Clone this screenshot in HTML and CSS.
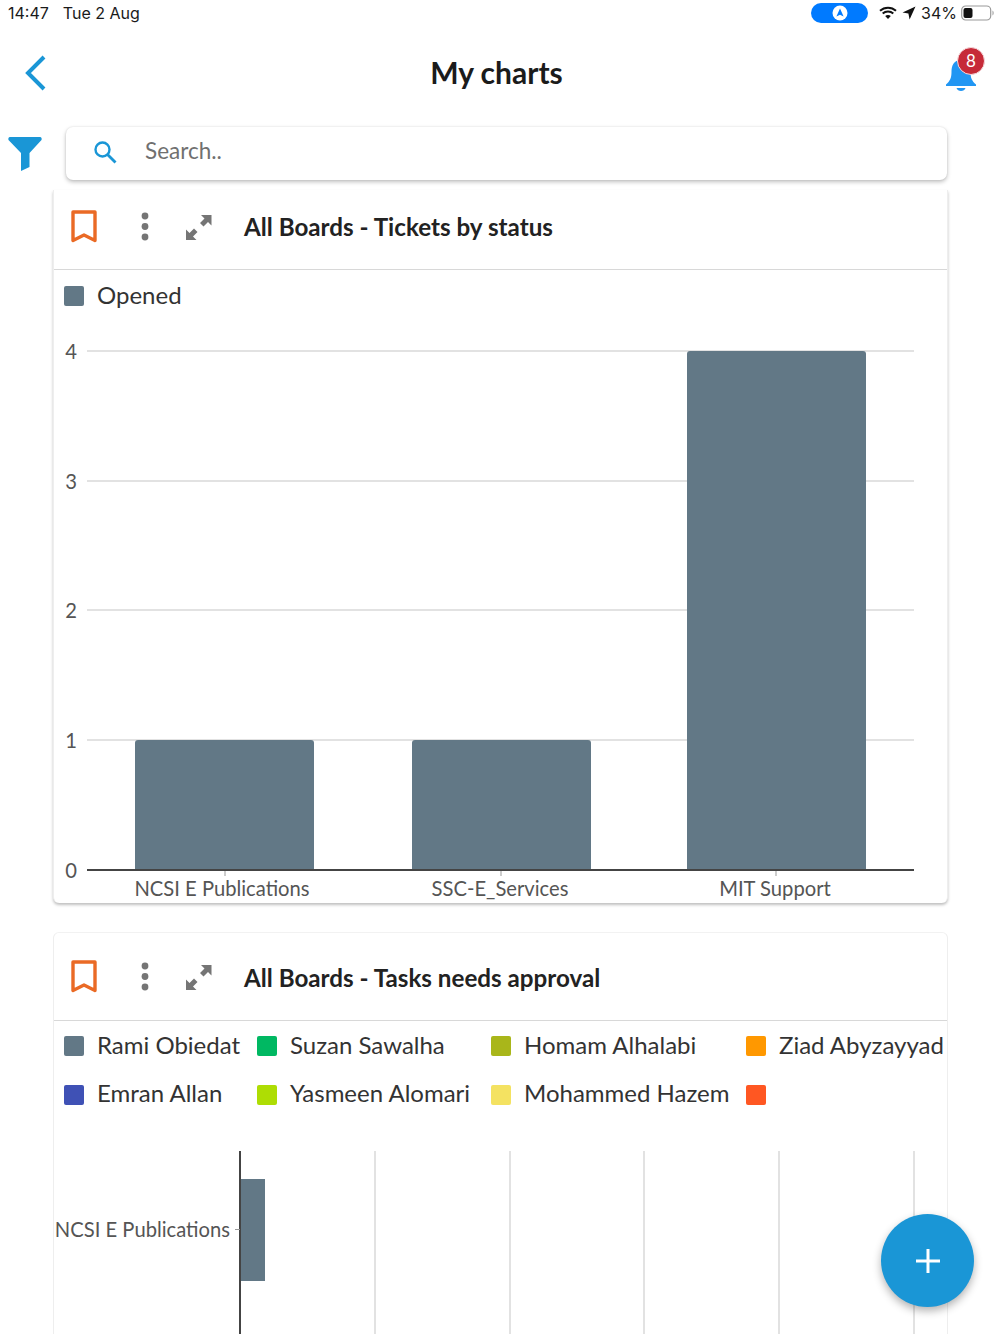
FILE: index.html
```html
<!DOCTYPE html>
<html>
<head>
  <title>My charts</title>
  <link rel="stylesheet" href="styles.css">
</head>
<body>
  <div id="app">

    <div class="status_bar">
      <span class="status_time">14:47</span>
      <span class="status_date">Tue 2 Aug</span>
      <span class="status_right">
        <span class="pill">
          <svg width="16" height="16" viewBox="0 0 16 16"><circle cx="8" cy="8" r="7.5" fill="#fff"/><path d="M8 3.5 L11.6 11.6 L8 9.8 L4.4 11.6 Z" fill="#007aff"/></svg>
        </span>
        <svg class="wifi" width="18" height="14" viewBox="0 0 18 14"><path d="M1 4.8 C5.5 .6 12.5 .6 17 4.8 M3.7 7.6 C6.7 4.9 11.3 4.9 14.3 7.6" fill="none" stroke="#111" stroke-width="2"/><path d="M6.2 10 C7.8 8.6 10.2 8.6 11.8 10 L9 13 Z" fill="#111"/></svg>
        <svg class="location" width="14" height="14" viewBox="0 0 14 14"><path d="M13.5 .5 L7.6 13.5 L6.4 7.6 L.5 6.4 Z" fill="#111"/></svg>
        <span class="status_pct">34%</span>
        <svg width="33" height="16" viewBox="0 0 33 16"><rect x=".7" y="1" width="29" height="14" rx="4" fill="none" stroke="#9a9a9a" stroke-width="1.2"/><rect x="2.5" y="3" width="9" height="10" rx="2" fill="#111"/><path d="M31.5 5.5 C33 6.2 33 9.8 31.5 10.5 Z" fill="#9a9a9a"/></svg>
      </span>
    </div>

    <div class="top_bar">
      <svg class="back" width="26" height="40" viewBox="0 0 26 40"><path d="M21 4 L5 20 L21 36" fill="none" stroke="#1a96d6" stroke-width="4"/></svg>
      <h1 class="page_title">My charts</h1>
      <div class="bell">
        <svg width="34" height="36" viewBox="0 0 34 36"><path d="M17 3 C9.5 3 7.5 9 7.5 15 C7.5 21 6 24 2 27.5 L2 29 L32 29 L32 27.5 C28 24 26.5 21 26.5 15 C26.5 9 24.5 3 17 3 Z" fill="#2196f3"/><path d="M12.5 31 L21.5 31 C20.5 35 13.5 35 12.5 31 Z" fill="#2196f3"/></svg>
        <span class="badge">8</span>
      </div>
    </div>

    <div class="search_row">
      <svg class="filter" width="34" height="34" viewBox="0 0 34 34"><path d="M2 0 L32 0 C33.5 0 34 1.5 33.500 3 L21.500 16 L21.500 30 L13 34 L13 16 L.5 3 C0 1.5 .5 0 2 0 Z" fill="#1a96d6"/></svg>
      <div class="search_box">
        <svg class="search_icon" width="24" height="24" viewBox="0 0 24 24"><circle cx="9.5" cy="9.5" r="7" fill="none" stroke="#1a96d6" stroke-width="2.4"/><path d="M14.5 14.5 L22.5 22.5" stroke="#1a96d6" stroke-width="2.8"/></svg>
        <span class="search_text">Search..</span>
      </div>
    </div>

    <div class="card first">
      <div class="card_header">
        <svg class="bookmark" width="28" height="34" viewBox="0 0 28 34"><path d="M3 2 L25 2 L25 30.5 L14 25 L3 30.5 Z" fill="none" stroke="#ea6a25" stroke-width="3.4" stroke-linejoin="round"/></svg>
        <svg class="dots" width="8" height="30" viewBox="0 0 8 30"><circle cx="4" cy="4" r="3.4" fill="#757575"/><circle cx="4" cy="14.5" r="3.4" fill="#757575"/><circle cx="4" cy="25" r="3.4" fill="#757575"/></svg>
        <svg class="expand" width="28" height="28" viewBox="0 0 28 28"><path d="M16 2 L26.500 2 L26.500 12.500 L23 9 L18.500 13.500 L15 10 L19.500 5.500 Z M1 27 L1 16.500 L4.500 20 L9 15.500 L12.500 19 L8 23.500 L11.500 27 Z" fill="#757575"/></svg>
        <h2 class="card_title">All Boards - Tickets by status</h2>
      </div>
      <div class="legend single">
        <span class="legend_item"><i class="swatch slate"></i>Opened</span>
      </div>
      <svg class="chart" width="892" height="573" viewBox="0 0 892 573">
        <g stroke="#e2e2e2" stroke-width="2">
          <line x1="33" y1="21" x2="860" y2="21"/>
          <line x1="33" y1="151" x2="860" y2="151"/>
          <line x1="33" y1="280" x2="860" y2="280"/>
          <line x1="33" y1="410" x2="860" y2="410"/>
        </g>
        <g fill="#627886">
          <path d="M81 540 V413 Q81 410 84 410 H257 Q260 410 260 413 V540 Z"/>
          <path d="M358 540 V413 Q358 410 361 410 H534 Q537 410 537 413 V540 Z"/>
          <path d="M633 540 V24 Q633 21 636 21 H809 Q812 21 812 24 V540 Z"/>
        </g>
        <line x1="33" y1="540" x2="860" y2="540" stroke="#444" stroke-width="2"/>
        <g stroke="#999" stroke-width="1">
          <line x1="171" y1="541" x2="171" y2="546"/>
          <line x1="447" y1="541" x2="447" y2="546"/>
          <line x1="722" y1="541" x2="722" y2="546"/>
        </g>
        <g class="axis_text" text-anchor="end">
          <text x="23" y="29">4</text>
          <text x="23" y="159">3</text>
          <text x="23" y="288">2</text>
          <text x="23" y="418">1</text>
          <text x="23" y="548">0</text>
        </g>
        <g class="axis_text" text-anchor="middle">
          <text x="168" y="566">NCSI E Publications</text>
          <text x="446" y="566">SSC-E_Services</text>
          <text x="721" y="566">MIT Support</text>
        </g>
      </svg>
    </div>

    <div class="card second">
      <div class="card_header tall">
        <svg class="bookmark" width="28" height="34" viewBox="0 0 28 34"><path d="M3 2 L25 2 L25 30.5 L14 25 L3 30.5 Z" fill="none" stroke="#ea6a25" stroke-width="3.4" stroke-linejoin="round"/></svg>
        <svg class="dots" width="8" height="30" viewBox="0 0 8 30"><circle cx="4" cy="4" r="3.4" fill="#757575"/><circle cx="4" cy="14.5" r="3.4" fill="#757575"/><circle cx="4" cy="25" r="3.4" fill="#757575"/></svg>
        <svg class="expand" width="28" height="28" viewBox="0 0 28 28"><path d="M16 2 L26.500 2 L26.500 12.500 L23 9 L18.500 13.500 L15 10 L19.500 5.500 Z M1 27 L1 16.500 L4.500 20 L9 15.500 L12.500 19 L8 23.500 L11.500 27 Z" fill="#757575"/></svg>
        <h2 class="card_title">All Boards - Tasks needs approval</h2>
      </div>
      <div class="legend grid">
        <span class="legend_item"><i class="swatch slate"></i>Rami Obiedat</span>
        <span class="legend_item"><i class="swatch green"></i>Suzan Sawalha</span>
        <span class="legend_item"><i class="swatch olive"></i>Homam Alhalabi</span>
        <span class="legend_item"><i class="swatch orange"></i>Ziad Abyzayyad</span>
        <span class="legend_item"><i class="swatch indigo"></i>Emran Allan</span>
        <span class="legend_item"><i class="swatch lime"></i>Yasmeen Alomari</span>
        <span class="legend_item"><i class="swatch yellow"></i>Mohammed Hazem</span>
        <span class="legend_item"><i class="swatch red"></i></span>
      </div>
      <svg class="chart" width="892" height="190" viewBox="0 0 892 190">
        <g stroke="#e2e2e2" stroke-width="2">
          <line x1="321" y1="0" x2="321" y2="190"/>
          <line x1="456" y1="0" x2="456" y2="190"/>
          <line x1="590" y1="0" x2="590" y2="190"/>
          <line x1="725" y1="0" x2="725" y2="190"/>
          <line x1="860" y1="0" x2="860" y2="190"/>
        </g>
        <rect x="187" y="28" width="24" height="102" fill="#627886"/>
        <line x1="186" y1="0" x2="186" y2="190" stroke="#444" stroke-width="2"/>
        <line x1="181" y1="78.500" x2="186" y2="78.500" stroke="#999" stroke-width="1"/>
        <text class="axis_text" x="176" y="86" text-anchor="end">NCSI E Publications</text>
      </svg>
    </div>

    <button class="fab">
      <svg width="26" height="26" viewBox="0 0 26 26"><path d="M13 1 V25 M1 13 H25" stroke="#fff" stroke-width="3"/></svg>
    </button>
  </div>
</body>
</html>
```

FILE: styles.css
```css
html, body {
  margin: 0;
  padding: 0;
  background-color: #fff;
}

body {
  font-family: Lato, "Noto Sans", sans-serif;
  color: #222;
}

#app {
  width: 1000px;
  height: 1334px;
  overflow: hidden;
}

.status_bar {
  display: flex;
  align-items: center;
  height: 26px;
  padding: 0 6px 0 8px;
  font-family: Inter, sans-serif;
  font-size: 16px;
  color: #1a1a1a;
}

.status_date {
  margin-left: 14px;
}

.status_right {
  display: flex;
  align-items: center;
  margin-left: auto;
}

.pill {
  display: flex;
  align-items: center;
  justify-content: center;
  width: 57px;
  height: 20px;
  margin-right: 11px;
  border-radius: 10px;
  background-color: #007aff;
}

.wifi {
  margin-right: 5px;
}

.location {
  margin-right: 5px;
}

.status_pct {
  margin-right: 4px;
}

.top_bar {
  display: flex;
  align-items: center;
  height: 94px;
  padding: 0 22px 0 23px;
}

.page_title {
  flex: 1;
  margin: 0 0 2px 0;
  text-align: center;
  font-size: 30px;
  font-weight: 700;
  color: #1b1b1b;
}

.bell {
  position: relative;
  width: 34px;
  height: 36px;
  margin-top: 4px;
}

.badge {
  position: absolute;
  top: -10px;
  left: 13px;
  width: 26px;
  height: 26px;
  border: 1px solid #f6d9dc;
  border-radius: 50%;
  background-color: #c62a38;
  color: #fff;
  font-size: 17px;
  line-height: 26px;
  text-align: center;
}

.search_row {
  display: flex;
  align-items: center;
  padding: 7px 53px 0 8px;
}

.filter {
  flex: none;
  margin: 0 24px 0 0;
}

.search_box {
  display: flex;
  align-items: center;
  flex: 1;
  height: 53px;
  padding-left: 27px;
  border-radius: 7px;
  background-color: #fff;
  box-shadow: 0 2px 4px rgba(0, 0, 0, 0.25), 0 0 2px rgba(0, 0, 0, 0.1);
}

.search_icon {
  margin-top: -3px;
}

.search_text {
  margin-left: 28px;
  margin-top: -7px;
  font-size: 22.5px;
  color: #707070;
}

.card {
  margin: 0 52px 0 53px;
  border-left: 1px solid #eee;
  border-right: 1px solid #eee;
  background-color: #fff;
}

.card.first {
  margin-top: 10px;
  height: 713px;
  border-radius: 0 0 6px 6px;
  box-shadow: 0 2px 3px rgba(0, 0, 0, 0.25);
}

.card.second {
  margin-top: 29px;
  border-top: 1px solid #f2f2f2;
  border-radius: 6px 6px 0 0;
}

.card_header {
  display: flex;
  align-items: center;
  height: 73px;
  padding: 0 0 6px 16px;
  border-bottom: 1px solid #d8d8d8;
}

.card_header.tall {
  height: 88px;
  padding: 1px 0 0 16px;
  box-sizing: border-box;
}

.dots {
  margin-left: 43px;
}

.expand {
  margin-left: 36px;
}

.card_title {
  margin: 0 0 0 31px;
  font-size: 24.2px;
  font-weight: 700;
  color: #222;
}

.legend {
  font-size: 24px;
  color: #333;
  padding-left: 10px;
}

.legend.single {
  display: flex;
  align-items: center;
  height: 48px;
  padding-bottom: 12px;
}

.legend.grid {
  display: grid;
  grid-template-columns: 193px 234px 255px auto;
  grid-auto-rows: 48.500px;
  height: 131px;
  align-items: center;
  margin-top: -1px;
}

.legend_item {
  display: flex;
  align-items: center;
  white-space: nowrap;
}

.swatch {
  flex: none;
  width: 20px;
  height: 20px;
  margin-top: 4px;
  margin-right: 13px;
  border-radius: 2px;
}

.slate { background-color: #627886; }
.green { background-color: #00b862; }
.olive { background-color: #a9b61a; }
.orange { background-color: #ff9800; }
.indigo { background-color: #3f51b5; }
.lime { background-color: #aedd04; }
.yellow { background-color: #f4e261; }
.red { background-color: #ff5722; }

.chart {
  display: block;
}

.axis_text {
  font-size: 20.2px;
  fill: #555;
}

.fab {
  position: fixed;
  left: 881px;
  top: 1214px;
  display: flex;
  align-items: center;
  justify-content: center;
  width: 93px;
  height: 93px;
  padding: 0;
  border: none;
  border-radius: 50%;
  background-color: #1a96d6;
  box-shadow: 0 4px 8px rgba(0, 0, 0, 0.3);
}
```
